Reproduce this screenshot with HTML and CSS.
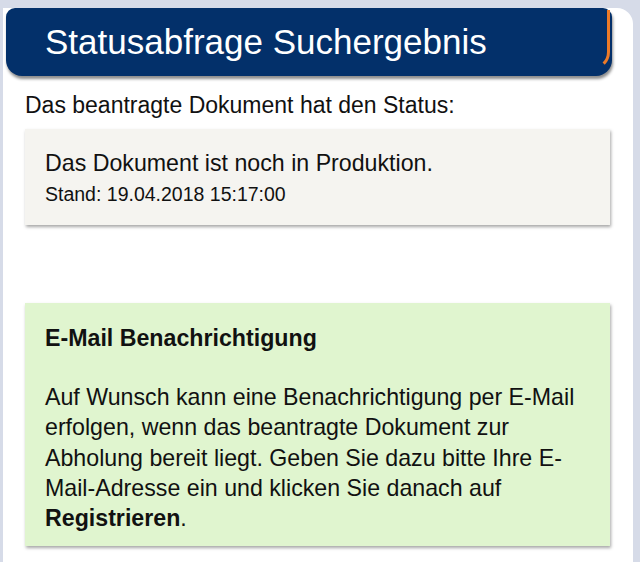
FILE: index.html
```html
<!DOCTYPE html>
<html lang="de">
<head>
<meta charset="utf-8">
<link rel="stylesheet" href="styles.css">
</head>
<body>
<div class="card">
  <div class="header"><h1 class="title">Statusabfrage Suchergebnis</h1></div>
  <p class="intro">Das beantragte Dokument hat den Status:</p>
  <div class="status">
    <div class="status-main">Das Dokument ist noch in Produktion.</div>
    <div class="status-date">Stand: 19.04.2018 15:17:00</div>
  </div>
  <div class="notify">
    <div class="notify-title">E-Mail Benachrichtigung</div>
    <p class="notify-text">Auf Wunsch kann eine Benachrichtigung per E-Mail erfolgen, wenn das beantragte Dokument zur Abholung bereit liegt. Geben Sie dazu bitte Ihre E-Mail-Adresse ein und klicken Sie danach auf <b>Registrieren</b>.</p>
  </div>
</div>
</body>
</html>
```
FILE: styles.css
```css
html, body {
  margin: 0;
  padding: 0;
  background: #d6dbe8;
  font-family: "Liberation Sans", Arial, sans-serif;
  color: #111;
  overflow: hidden;
}
.card {
  margin: 43px 0 0 3px;
  width: 630px;
  min-height: 560px;
  background: #fff;
  border-top-right-radius: 16px;
}
.header {
  position: relative;
  margin: -35px 21px 0 3px;
  height: 68px;
  background: #03306a;
  border-radius: 9px 9px 16px 16px;
  box-shadow: 1px 3px 3px rgba(0,0,0,0.45);
}
.header::after {
  content: "";
  position: absolute;
  top: 2px;
  right: 2px;
  bottom: 6px;
  width: 22px;
  border-right: 3px solid #ec7a28;
  border-bottom: 3px solid transparent;
  border-bottom-right-radius: 18px;
}
.title {
  margin: 0;
  padding: 14px 0 0 39px;
  font-weight: normal;
  font-size: 35px;
  line-height: 40px;
  color: #fff;
}
.intro {
  margin: 15px 0 0 22px;
  font-size: 23px;
  line-height: 28px;
}
.status {
  margin: 10px 23px 0 22px;
  padding: 20px 20px 19px;
  background: #f5f4f0;
  box-shadow: 1px 2px 3px rgba(0,0,0,0.35);
}
.status-main {
  font-size: 23.2px;
  line-height: 28px;
}
.status-date {
  margin-top: 5px;
  font-size: 19.5px;
  line-height: 24px;
}
.notify {
  margin: 78px 23px 0 22px;
  padding: 21px 20px 13px;
  background: #e0f5cf;
  box-shadow: 1px 2px 3px rgba(0,0,0,0.35);
}
.notify-title {
  font-weight: bold;
  font-size: 23.2px;
  line-height: 28px;
}
.notify-text {
  margin: 30px 0 0;
  font-size: 23.2px;
  line-height: 30.3px;
}
```
